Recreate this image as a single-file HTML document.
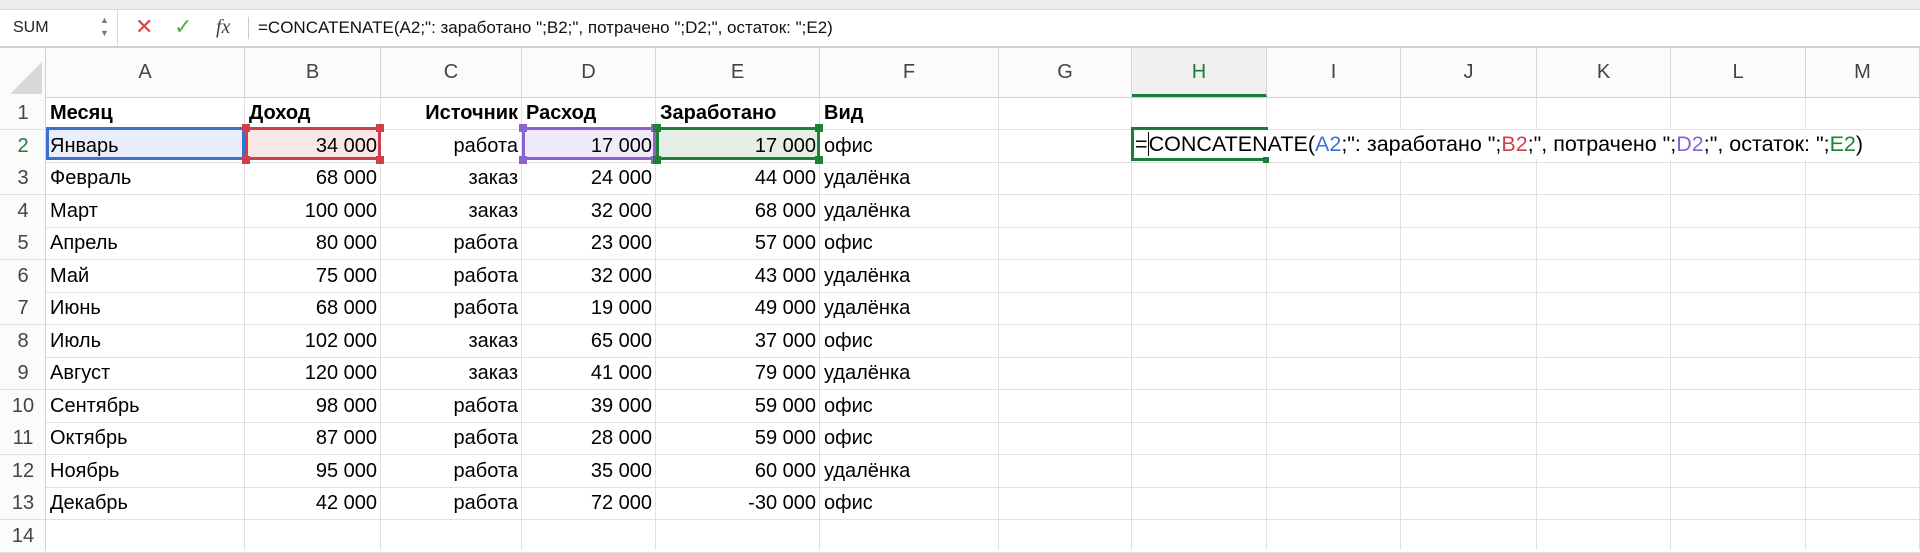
<!DOCTYPE html><html><head><meta charset="utf-8"><style>
body{margin:0;width:1920px;height:550px;overflow:hidden;background:#fff;font-family:"Liberation Sans",sans-serif;position:relative}
.a{position:absolute}
.c{position:absolute;height:32px;line-height:33px;font-size:20px;color:#000;white-space:nowrap;padding:0 4px;box-sizing:border-box}
.r{text-align:right}.b{font-weight:bold}
.hd{position:absolute;top:48px;height:49px;line-height:49px;text-align:center;font-size:20px;color:#444;border-right:1px solid #d6d6d6;box-sizing:border-box;background:#fbfbfb}
.rn{position:absolute;left:0;width:46px;height:33px;line-height:33px;text-align:center;font-size:20px;color:#444;background:#fbfbfb;box-sizing:border-box}
</style></head><body>
<div class="a" style="left:0;top:0;width:1920px;height:9px;background:#ececec;border-bottom:1px solid #d8d8d8"></div>
<div class="a" style="left:0;top:10px;width:1920px;height:36px;background:#fff;border-bottom:2px solid #cfcfcf"></div>
<div class="a" style="left:0;top:10px;width:117px;height:36px;border-right:1px solid #d8d8d8"></div>
<div class="a" style="left:13px;top:17px;font-size:16px;line-height:22px;color:#222">SUM</div>
<div class="a" style="left:100px;top:14px;font-size:9px;line-height:13px;color:#777">▲<br>▼</div>
<div class="a" style="left:135px;top:13px;font-size:22px;color:#e0443e;line-height:28px">✕</div>
<div class="a" style="left:174px;top:13px;font-size:22px;color:#4caf50;line-height:28px">✓</div>
<div class="a" style="left:216px;top:13px;font-size:20px;font-style:italic;font-family:'Liberation Serif',serif;color:#444;line-height:28px">fx</div>
<div class="a" style="left:248px;top:17px;width:1px;height:22px;background:#ccc"></div>
<div class="a" style="left:258px;top:16px;font-size:17px;line-height:24px;color:#111">=CONCATENATE(A2;": заработано ";B2;", потрачено ";D2;", остаток: ";E2)</div>
<div class="a" style="left:0;top:48px;width:1920px;height:49px;background:#fbfbfb;border-bottom:1px solid #d0d0d0"></div>
<div class="a" style="left:0;top:48px;width:46px;height:49px;background:#fbfbfb;border-right:1px solid #d0d0d0;box-sizing:border-box"></div>
<svg class="a" style="left:8px;top:60px" width="36" height="36"><polygon points="34,2 34,34 2,34" fill="#d8d8d8"/></svg>
<div id="g"></div>
<script>
var X=[0,46,245,381,522,656,820,999,1132,1267,1401,1537,1671,1806,1920],L="ABCDEFGHIJKLM",h="";
for(var i=0;i<13;i++){h+='<div class="hd" style="left:'+X[i+1]+'px;width:'+(X[i+2]-X[i+1])+'px;'+(i==7?'color:#1e7a3a;border-bottom:3px solid #1e7a3a;background:#f0f0f0':'')+'">'+L[i]+'</div>';
h+='<div class="a" style="left:'+(X[i+2]-1)+'px;top:97px;width:1px;height:453px;background:#e0e0e0"></div>';}
for(var r=0;r<14;r++){var y=97+r*32.5;h+='<div class="rn" style="top:'+y+'px;'+(r==1?'color:#1e7a3a':'')+'">'+(r+1)+'</div><div class="a" style="left:0;top:'+(y+32)+'px;width:1920px;height:1px;background:#e0e0e0"></div>';}
h+='<div class="a" style="left:45px;top:97px;width:1px;height:453px;background:#d0d0d0"></div>';
var D=[["Январь","34 000","работа","17 000","17 000","офис"],["Февраль","68 000","заказ","24 000","44 000","удалёнка"],["Март","100 000","заказ","32 000","68 000","удалёнка"],["Апрель","80 000","работа","23 000","57 000","офис"],["Май","75 000","работа","32 000","43 000","удалёнка"],["Июнь","68 000","работа","19 000","49 000","удалёнка"],["Июль","102 000","заказ","65 000","37 000","офис"],["Август","120 000","заказ","41 000","79 000","удалёнка"],["Сентябрь","98 000","работа","39 000","59 000","офис"],["Октябрь","87 000","работа","28 000","59 000","офис"],["Ноябрь","95 000","работа","35 000","60 000","удалёнка"],["Декабрь","42 000","работа","72 000","-30 000","офис"]];
var sel=[["#3d6fd1","#e9eef8"],["#cf3f48","#f9e6e7"],null,["#8c62cf","#f0ebfa"],["#1f8038","#e5efe6"]];
for(var k=0;k<5;k++){if(!sel[k])continue;var s=sel[k];h+='<div class="a" style="left:'+X[k+1]+'px;top:127px;width:'+(X[k+2]-X[k+1])+'px;height:33px;box-sizing:border-box;border:3px solid '+s[0]+';background:'+s[1]+'"></div>';
if(k>0){[[X[k+1]-3,124],[X[k+2]-5,124],[X[k+1]-3,156],[X[k+2]-5,156]].forEach(function(p){h+='<div class="a" style="left:'+p[0]+'px;top:'+p[1]+'px;width:8px;height:8px;background:'+s[0]+'"></div>'});}}
var hdr=["Месяц","Доход","Источник","Расход","Заработано","Вид"];
for(var c=0;c<6;c++){var al=(c==2)?' r':'';h+='<div class="c b'+al+'" style="left:'+X[c+1]+'px;width:'+(X[c+2]-X[c+1])+'px;top:97px">'+hdr[c]+'</div>';}
for(var r=0;r<12;r++)for(var c=0;c<6;c++){var al=(c==0||c==5)?'':' r';h+='<div class="c'+al+'" style="left:'+X[c+1]+'px;width:'+(X[c+2]-X[c+1])+'px;top:'+(129.5+r*32.5)+'px">'+D[r][c]+'</div>';}
h+='<div class="c" style="left:1132px;top:130px;height:29px;line-height:29px;padding-left:3px;font-size:21.5px;background:#fff;padding-right:6px">=<span style="border-left:1px solid #000"></span>CONCATENATE(<span style="color:#3d6fd1">A2</span>;": заработано ";<span style="color:#cf3f48">B2</span>;", потрачено ";<span style="color:#8c62cf">D2</span>;", остаток: ";<span style="color:#1f8038">E2</span>)</div>';
h+='<div class="a" style="left:1131px;top:127px;width:137px;height:34px;box-sizing:border-box;border:3px solid #1e7a3a;border-right:none"></div><div class="a" style="left:1263px;top:157px;width:6px;height:6px;background:#1e7a3a"></div>';
document.getElementById("g").innerHTML=h;
</script>
</body></html>
